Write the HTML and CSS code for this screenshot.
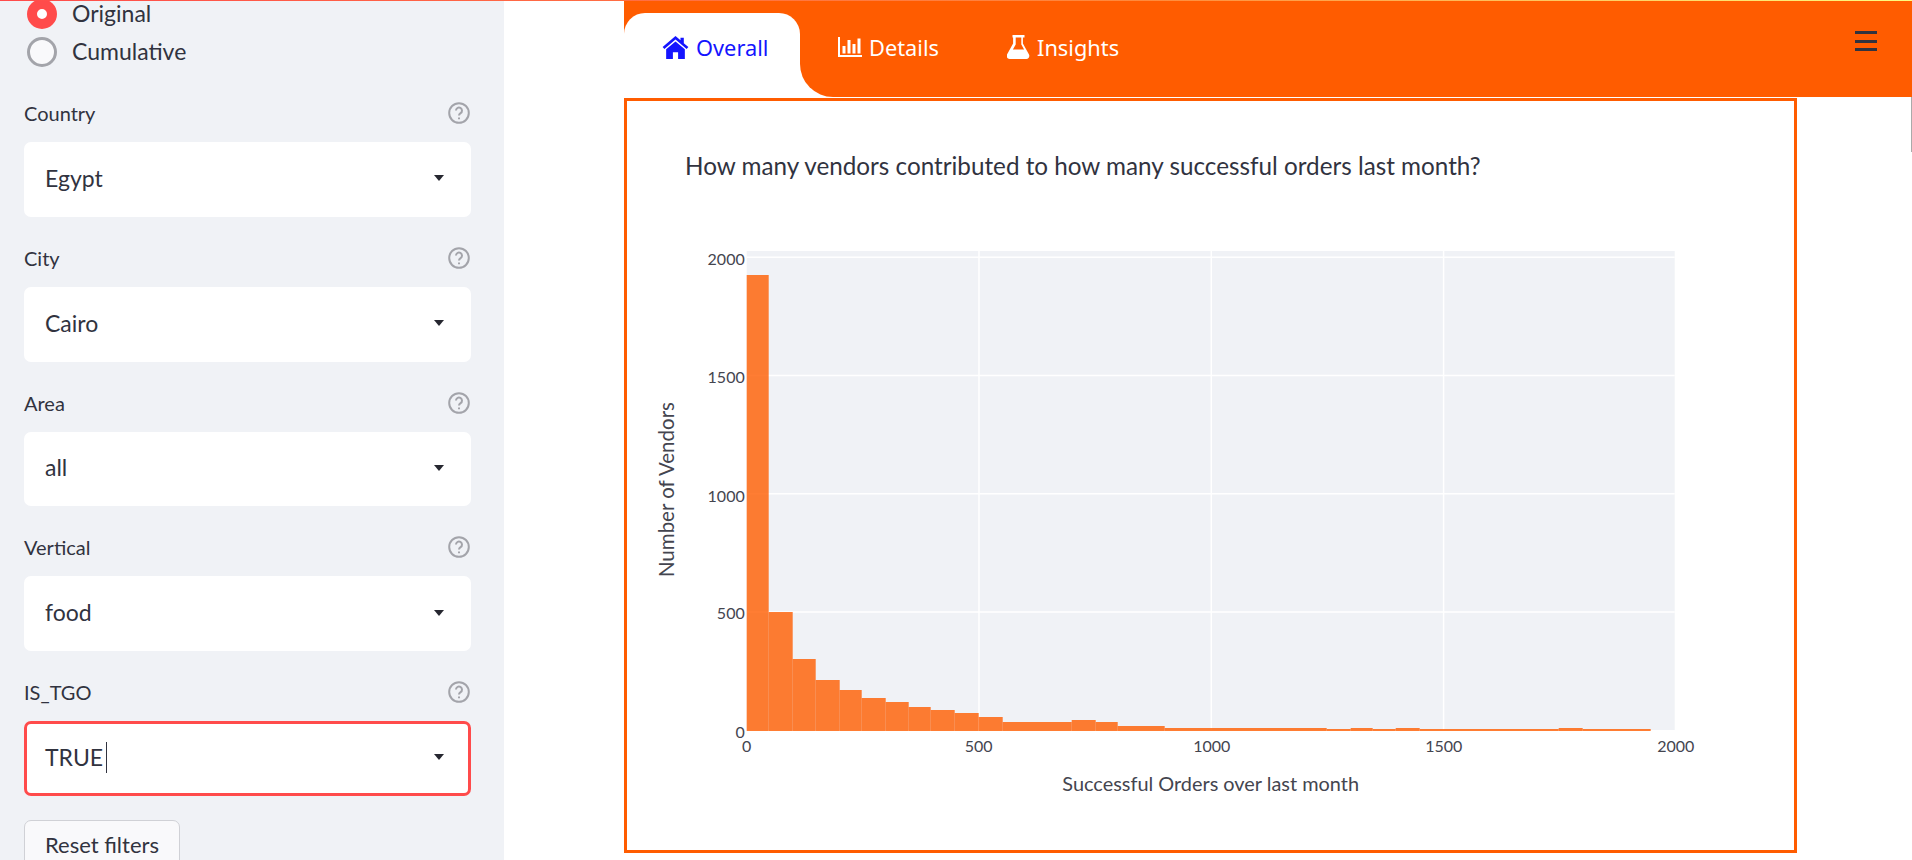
FILE: index.html
```html
<!DOCTYPE html>
<html lang="en">
<head>
<meta charset="utf-8">
<title>Vendors dashboard</title>
<link rel="stylesheet" href="styles.css">
</head>
<body>
<div class="decoration"></div>
<div class="scroll-thumb"></div>
<div class="app">
  <aside class="sidebar">
    <div class="radio-group">
      <div class="radio-row">
        <span class="radio radio-on"></span><span class="radio-text">Original</span>
      </div>
      <div class="radio-row">
        <span class="radio"></span><span class="radio-text">Cumulative</span>
      </div>
    </div>
    <div class="field">
      <div class="field-label"><span>Country</span><svg class="help" viewBox="0 0 22 22"><circle cx="11" cy="11" r="9.8"/><path d="M8 8.6a3 3 0 1 1 4.6 2.5c-1 .7-1.6 1.2-1.6 2.4"/><path d="M11 15.6v1.6"/></svg></div>
      <div class="select"><span class="select-value">Egypt</span><span class="caret"></span></div>
    </div>
    <div class="field">
      <div class="field-label"><span>City</span><svg class="help" viewBox="0 0 22 22"><circle cx="11" cy="11" r="9.8"/><path d="M8 8.6a3 3 0 1 1 4.6 2.5c-1 .7-1.6 1.2-1.6 2.4"/><path d="M11 15.6v1.6"/></svg></div>
      <div class="select"><span class="select-value">Cairo</span><span class="caret"></span></div>
    </div>
    <div class="field">
      <div class="field-label"><span>Area</span><svg class="help" viewBox="0 0 22 22"><circle cx="11" cy="11" r="9.8"/><path d="M8 8.6a3 3 0 1 1 4.6 2.5c-1 .7-1.6 1.2-1.6 2.4"/><path d="M11 15.6v1.6"/></svg></div>
      <div class="select"><span class="select-value">all</span><span class="caret"></span></div>
    </div>
    <div class="field">
      <div class="field-label"><span>Vertical</span><svg class="help" viewBox="0 0 22 22"><circle cx="11" cy="11" r="9.8"/><path d="M8 8.6a3 3 0 1 1 4.6 2.5c-1 .7-1.6 1.2-1.6 2.4"/><path d="M11 15.6v1.6"/></svg></div>
      <div class="select"><span class="select-value">food</span><span class="caret"></span></div>
    </div>
    <div class="field field-last">
      <div class="field-label"><span>IS_TGO</span><svg class="help" viewBox="0 0 22 22"><circle cx="11" cy="11" r="9.8"/><path d="M8 8.6a3 3 0 1 1 4.6 2.5c-1 .7-1.6 1.2-1.6 2.4"/><path d="M11 15.6v1.6"/></svg></div>
      <div class="select select-focus"><span class="select-value">TRUE</span><span class="text-cursor"></span><span class="caret"></span></div>
    </div>
    <button class="reset" type="button">Reset filters</button>
  </aside>
  <main class="main">
    <nav class="tabs">
      <a class="tab tab-active"><svg class="tab-icon" viewBox="0 0 26 22"><path d="M13 0 .6 10.500l1.700 2L13 3.400l10.700 9.100 1.700-2-4.400-3.700V1.500h-3.200v2.600z"/><path d="M13 5.200 4 12.800V22h6.500v-6.400h5V22H22v-9.200z"/></svg><span>Overall</span></a>
      <div class="tab-rest">
        <a class="tab tab-details"><svg class="tab-icon" viewBox="0 0 24 20"><path d="M0 0h2v18h22v2H0z"/><path d="M4.500 9h3v7.500h-3zM9.500 3h3v13.500h-3zM14.500 7h3v9.500h-3zM19.500 1.500h3v15h-3z"/></svg><span>Details</span></a>
        <a class="tab tab-insights"><svg class="tab-icon" viewBox="0 0 22 24"><path d="M5 0h12v2.400h-1.600v6.200l6.100 10.800c1 1.900-.3 4.600-2.600 4.600H2.100C-.2 24-1.500 21.300-.5 19.400l6.100-10.800V2.400H5zM8.200 2.400v7L5.400 14.500h11.200L13.800 9.400v-7z"/></svg><span>Insights</span></a>
        <div class="menu" aria-label="menu"><i></i><i></i><i></i></div>
      </div>
    </nav>
    <section class="card">
      <h2 class="card-title">How many vendors contributed to how many successful orders last month?</h2>
      <svg class="chart" viewBox="2.300 0 1168 620" width="1168" height="620">
        <rect class="plot-bg" x="122" y="20" width="928" height="479"/>
        <g class="grid">
          <path d="M354.300 20V499M586.600 20V499M818.900 20V499"/>
          <path d="M122 26.300H1050M122 144.500H1050M122 262.700H1050M122 381H1050"/>
        </g>
        <g class="bars">
          <rect x="122" y="44" width="22" height="456"/>
          <rect x="144" y="381" width="24" height="119"/>
          <rect x="168" y="428" width="23" height="72"/>
          <rect x="191" y="449" width="24" height="51"/>
          <rect x="215" y="459" width="22" height="41"/>
          <rect x="237" y="467" width="24" height="33"/>
          <rect x="261" y="471" width="23" height="29"/>
          <rect x="284" y="476" width="22" height="24"/>
          <rect x="306" y="479" width="24" height="21"/>
          <rect x="330" y="482" width="24" height="18"/>
          <rect x="354" y="486" width="24" height="14"/>
          <rect x="378" y="491" width="69" height="9"/>
          <rect x="447" y="489" width="24" height="11"/>
          <rect x="471" y="491" width="22" height="9"/>
          <rect x="493" y="495" width="47" height="5"/>
          <rect x="540" y="497" width="162" height="3"/>
          <rect x="702" y="498" width="24" height="2"/>
          <rect x="726" y="497" width="22" height="3"/>
          <rect x="748" y="498" width="23" height="2"/>
          <rect x="771" y="497" width="24" height="3"/>
          <rect x="795" y="498" width="139" height="2"/>
          <rect x="934" y="497" width="24" height="3"/>
          <rect x="958" y="498" width="68" height="2"/>
        </g>
        <g class="ticks-y">
          <text x="120" y="34">2000</text>
          <text x="120" y="151.500">1500</text>
          <text x="120" y="270.500">1000</text>
          <text x="120" y="388">500</text>
          <text x="120" y="506.500">0</text>
        </g>
        <g class="ticks-x">
          <text x="122" y="520.500">0</text>
          <text x="354" y="520.500">500</text>
          <text x="587" y="520.500">1000</text>
          <text x="819" y="520.500">1500</text>
          <text x="1051" y="520.500">2000</text>
        </g>
        <text class="axis-title" x="586" y="560">Successful Orders over last month</text>
        <text class="axis-title axis-title-y" transform="translate(49 258.600) rotate(-90)">Number of Vendors</text>
      </svg>
    </section>
  </main>
</div>
</body>
</html>
```
FILE: styles.css
```css
* { box-sizing: border-box; }
html, body { margin: 0; height: 860px; overflow: hidden; background: #fff; }
body { font-family: "Lato", "Noto Sans", sans-serif; color: #31333f; }
.decoration { position: absolute; top: 0; left: 0; right: 0; height: 1px; background: linear-gradient(90deg, #ff4b4b, #ff8a3c 60%, #fffd80); z-index: 2; }
.scroll-thumb { position: absolute; top: 97px; right: 0; width: 1px; height: 55px; background: #aaa; }
.app { display: grid; grid-template-columns: 504px 1fr; height: 860px; }

.sidebar { background: #f0f2f6; padding: 0 33px 0 24px; overflow: hidden; }
.radio-group { margin-top: -1px; display: flex; flex-direction: column; gap: 8px; padding-left: 3px; margin-bottom: 34px; }
.radio-row { display: flex; align-items: center; gap: 15px; height: 30px; }
.radio { width: 30px; height: 30px; border-radius: 50%; background: #f9f9fb; border: 3px solid #a3a4aa; }
.radio-on { background: #fff; border: 10px solid #ff4b4b; }
.radio-text { font-size: 23px; padding-bottom: 2px; }
.field { margin-bottom: 29px; }
.field-last { margin-bottom: 24px; }
.field-label { display: flex; justify-content: space-between; align-items: center; height: 24px; font-size: 20px; margin-bottom: 17px; padding-right: 1px; }
.help { width: 22px; height: 22px; fill: none; stroke: #a3a4aa; stroke-width: 2; }
.select { display: flex; align-items: center; height: 74.750px; background: #fff; border-radius: 7px; padding: 0 27px 2px 21px; font-size: 23px; }
.select-value { line-height: 1; }
.select-focus { border: 3px solid #ff4b4b; padding: 0 24px 2px 18px; }
.text-cursor { width: 1px; height: 31px; background: #31333f; margin-left: 3px; }
.caret { margin-left: auto; width: 0; height: 0; border-left: 5.500px solid transparent; border-right: 5.500px solid transparent; border-top: 6px solid #262730; }
.reset { display: block; width: 156px; height: 50px; background: #f9f9fb; border: 1px solid #d0d1d6; border-radius: 7px; font: 22px "Lato", sans-serif; color: #31333f; padding: 0; white-space: nowrap; }

.main { min-width: 0; }
.tabs { display: flex; height: 96px; margin: 1px 0 0 120px; background: linear-gradient(#ff5c00 50%, #fff 50%); font-family: "Noto Sans", sans-serif; }
.tab { display: flex; align-items: center; gap: 7px; font-size: 21.800px; color: #fff; text-decoration: none; }
.tab-active { width: 176px; margin-top: 12px; padding: 0 0 15px 38px; background: #fff; color: #1414ff; border-radius: 21px 21px 0 0; flex: none; }
.tab-icon { fill: currentColor; width: 27px; height: 23px; flex: none; }
.tab-rest { flex: 1; display: flex; align-items: center; gap: 68px; padding: 0 0 4px 38px; background: #ff5c00; border-bottom-left-radius: 33px; }
.tab-details .tab-icon { width: 24px; height: 20px; }
.tab-insights .tab-icon { width: 23px; height: 24px; }
.menu { align-self: flex-start; margin: 30px 35px 0 auto; display: flex; flex-direction: column; gap: 5.500px; width: 22px; }
.menu i { display: block; height: 3px; background: #31333f; }

.card { width: 1173px; height: 755px; margin: 1px 0 0 120px; border: 3px solid #ff5c00; padding: 0; }
.card-title { margin: 0; font-weight: 400; font-size: 24.250px; padding: 49px 0 0 58px; line-height: 32px; height: 130px; }
.chart { display: block; font-family: "Lato", sans-serif; }
.plot-bg { fill: #f0f2f6; }
.grid path { stroke: #fff; stroke-width: 1.500; fill: none; }
.bars rect { fill: #ff5c00; fill-opacity: .8; }
.ticks-y text { font-size: 16px; fill: #44454f; text-anchor: end; }
.ticks-x text { font-size: 16px; fill: #44454f; text-anchor: middle; }
.axis-title { font-size: 19.900px; fill: #44454f; text-anchor: middle; }
.axis-title-y { font-size: 20.500px; }
```
